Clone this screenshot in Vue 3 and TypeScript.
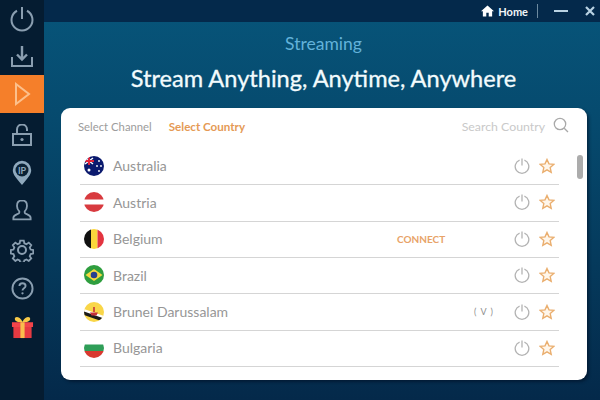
<script setup lang="ts">
const navItems = [
  { id: 'power', height: 38 },
  { id: 'download', height: 37 },
  { id: 'play', height: 38 },
  { id: 'lock', height: 44 },
  { id: 'ip', height: 32 },
  { id: 'user', height: 42 },
  { id: 'gear', height: 38 },
  { id: 'help', height: 39 },
  { id: 'gift', height: 38 },
]

const countries = [
  { name: 'Australia', flag: 'au', note: '' },
  { name: 'Austria', flag: 'at', note: '' },
  { name: 'Belgium', flag: 'be', note: 'connect' },
  { name: 'Brazil', flag: 'br', note: '' },
  { name: 'Brunei Darussalam', flag: 'bn', note: 'v' },
  { name: 'Bulgaria', flag: 'bg', note: '' },
]
</script>

<template>
  <div class="app">
    <nav class="sidebar">
      <div
        v-for="item in navItems"
        :key="item.id"
        class="nav-item"
        :class="{ active: item.id === 'play' }"
        :style="{ height: item.height + 'px' }"
      >
        <svg v-if="item.id === 'power'" width="26" height="26" viewBox="0 0 26 26" class="nav-icon">
          <path d="M8 4.750a10.500 10.500 0 1 0 10 0" />
          <path d="M13 1v12" />
        </svg>
        <svg v-else-if="item.id === 'download'" width="22" height="21" viewBox="0 0 22 21" class="nav-icon">
          <path d="M1 11v9h20v-9" />
          <path d="M11 0v13M6 8.500l5 5 5-5" stroke-width="2.400" />
        </svg>
        <svg v-else-if="item.id === 'play'" width="17" height="24" viewBox="0 0 17 24" class="play-icon">
          <path d="M2 2l13 10-13 10z" />
        </svg>
        <svg v-else-if="item.id === 'lock'" width="20" height="22" viewBox="0 0 20 22" class="nav-icon">
          <path d="M1 10h18v11H1z" />
          <path d="M5 10V5.500a5 5 0 0 1 10 0V7" />
          <circle cx="10" cy="15.500" r="1.600" class="fill" />
        </svg>
        <svg v-else-if="item.id === 'ip'" width="20" height="26" viewBox="0 0 20 26">
          <path d="M10 25C4 18 .8 14.500.8 10a9.200 9.200 0 0 1 18.400 0c0 4.500-3.200 8-9.200 15z" fill="#8fa9bd" />
          <circle cx="10" cy="10" r="6.500" fill="#0a2236" />
          <text x="10" y="13.500" text-anchor="middle" class="ip-label">IP</text>
        </svg>
        <svg v-else-if="item.id === 'user'" width="20" height="24" viewBox="0 0 22 24" class="nav-icon">
          <path d="M11 1.500c-3.800 0-5.500 2.700-5.500 6 0 2.500 1 4.500 2.500 6v1.500c0 1.500-6.500 2-6.500 5.500v1.800h19v-1.800c0-3.500-6.500-4-6.500-5.500v-1.500c1.500-1.500 2.500-3.500 2.500-6 0-3.300-1.700-6-5.500-6z" />
        </svg>
        <svg v-else-if="item.id === 'gear'" width="24" height="24" viewBox="0 0 24 24" class="nav-icon">
          <path d="M10 1.500h4l.6 3 2.300 1 2.600-1.700 2.800 2.800-1.700 2.600 1 2.300 2.900.5v4l-2.900.6-1 2.300 1.700 2.500-2.800 2.800-2.600-1.700-2.300 1-.6 2.500h-4l-.6-2.500-2.300-1-2.500 1.700-2.800-2.800 1.700-2.500-1-2.300-2.900-.6v-4l2.900-.5 1-2.300-1.700-2.600 2.800-2.800 2.500 1.700 2.300-1z" transform="translate(1.200 1.200) scale(.9)" />
          <circle cx="12" cy="12" r="4" />
        </svg>
        <svg v-else-if="item.id === 'help'" width="23" height="23" viewBox="0 0 24 24" class="nav-icon">
          <circle cx="12" cy="12" r="10.500" />
          <path d="M8.800 9.500c0-2 1.500-3 3.200-3s3.200 1 3.200 2.800c0 2.400-3.200 2.400-3.200 4.700" stroke-width="2" />
          <circle cx="12" cy="17" r="1.200" class="fill" />
        </svg>
        <svg v-else width="23" height="23" viewBox="0 0 24 24">
          <path d="M12 6C9 0 4 0 4 3c0 2.500 3 3.500 8 3.500 5 0 8-1 8-3.500 0-3-5-3-8 3z" fill="#f7c948" />
          <path d="M1 6.500h22v5H1z" fill="#f2444a" />
          <path d="M2.500 11.500h19V23h-19z" fill="#e63a42" />
          <path d="M9.800 6.500h4.400V23H9.800z" fill="#f9bd4d" />
        </svg>
      </div>
    </nav>

    <div class="main">
      <header class="topbar">
        <svg width="13" height="12" viewBox="0 0 14 12" class="home-icon">
          <path d="M7 0L0 6.200h2V12h3.700V8h2.600v4H12V6.200h2z" fill="#fff" />
        </svg>
        <span class="home-label">Home</span>
        <span class="divider"></span>
        <span class="minimize"></span>
        <svg width="10" height="10" viewBox="0 0 10 10" class="close">
          <path d="M1 1l8 8M9 1l-8 8" stroke="#b9d2e3" stroke-width="2.200" />
        </svg>
      </header>

      <div class="heading">
        <div class="subtitle">Streaming</div>
        <h1 class="title">Stream Anything, Anytime, Anywhere</h1>
      </div>

      <section class="card">
        <div class="tabs">
          <span class="tab">Select Channel</span>
          <span class="tab current">Select Country</span>
          <span class="search">Search Country</span>
          <svg width="16" height="16" viewBox="0 0 16 16" class="search-icon">
            <circle cx="7" cy="7" r="5.700" />
            <path d="M11.200 11.200L15 15" />
          </svg>
        </div>

        <ul class="list">
          <li v-for="country in countries" :key="country.name" class="row">
            <svg width="20" height="20" viewBox="0 0 20 20" class="flag">
              <template v-if="country.flag === 'au'">
                <rect width="20" height="20" fill="#0b1a6e" />
                <path d="M1 2l8 6M9 2L1 8" stroke="#fff" stroke-width="1.400" />
                <path d="M5 1v8M0 5h10" stroke="#e0243a" stroke-width="2" />
                <circle cx="5" cy="14" r="1.500" fill="#fff" />
                <circle cx="15" cy="5" r=".9" fill="#fff" />
                <circle cx="13" cy="10" r=".9" fill="#fff" />
                <circle cx="17" cy="10" r=".9" fill="#fff" />
                <circle cx="15" cy="15" r=".9" fill="#fff" />
              </template>
              <template v-else-if="country.flag === 'at'">
                <rect width="20" height="20" fill="#fff" />
                <path d="M0 0h20v7.500H0z" fill="#d83a3f" />
                <path d="M0 12.500h20V20H0z" fill="#d83a3f" />
              </template>
              <template v-else-if="country.flag === 'be'">
                <rect width="7" height="20" fill="#111" />
                <rect x="7" width="6.500" height="20" fill="#fbd63c" />
                <rect x="13.500" width="6.500" height="20" fill="#e3343f" />
              </template>
              <template v-else-if="country.flag === 'br'">
                <rect width="20" height="20" fill="#2f9e3f" />
                <path d="M10 4l8.500 6-8.500 6-8.500-6z" fill="#f6d93f" />
                <circle cx="10" cy="10" r="3.300" fill="#27408f" />
              </template>
              <template v-else-if="country.flag === 'bn'">
                <rect width="20" height="20" fill="#f9d648" />
                <path d="M0 7l20 7v3L0 10z" fill="#fff" />
                <path d="M0 9.500l20 7v3.500L0 13z" fill="#1b1b1b" />
                <path d="M6 10.500h8l-1.500 3h-5z" fill="#c6303a" />
                <path d="M10 5v5" stroke="#c6303a" stroke-width="1.600" />
              </template>
              <template v-else>
                <rect width="20" height="20" fill="#fff" />
                <path d="M0 6.500h20V13H0z" fill="#2f9e58" />
                <path d="M0 13h20v7H0z" fill="#d8392f" />
              </template>
            </svg>
            <span class="name">{{ country.name }}</span>
            <span v-if="country.note === 'connect'" class="connect">CONNECT</span>
            <span v-else-if="country.note === 'v'" class="badge">( V )</span>
            <svg width="16" height="16" viewBox="0 0 16 16" class="row-power">
              <path d="M5.600 2.140a6.800 6.800 0 1 0 4.800 0" />
              <path d="M8 .5v7" />
            </svg>
            <svg width="16" height="16" viewBox="0 0 16 16" class="row-star">
              <path d="M8 1.500l2 4.400 4.800.5-3.600 3.200 1 4.700L8 11.900l-4.200 2.400 1-4.700L1.200 6.400 6 5.900z" />
            </svg>
          </li>
        </ul>

        <div class="thumb"></div>
      </section>
    </div>
  </div>
</template>

<style scoped>
.app {
  display: flex;
  width: 600px;
  height: 400px;
  overflow: hidden;
  font-family: Lato, 'Open Sans', sans-serif;
}

.sidebar {
  width: 44px;
  flex: none;
  background: #051c31;
}

.nav-item {
  display: flex;
  align-items: center;
  justify-content: center;
  box-sizing: border-box;
}

.nav-item.active {
  background: #f57f2a;
}

.nav-icon {
  fill: none;
  stroke: #8a9eb0;
  stroke-width: 2;
}

.nav-icon .fill {
  fill: #8a9eb0;
  stroke: none;
}

.play-icon {
  fill: none;
  stroke: #fcc08c;
  stroke-width: 2;
}

.ip-label {
  font-size: 9px;
  font-weight: 700;
  fill: #8fa9bd;
}

.main {
  flex: 1;
  display: flex;
  flex-direction: column;
  background: linear-gradient(180deg, #07557a 0%, #064a6e 30%, #053a5c 65%, #04294a 100%);
}

.topbar {
  height: 22px;
  flex: none;
  display: flex;
  align-items: center;
  justify-content: flex-end;
  padding-right: 5px;
  background: #04294b;
}

.home-icon {
  margin-right: 4px;
}

.home-label {
  font-size: 11px;
  font-weight: 700;
  color: #f2f6f8;
}

.divider {
  width: 1px;
  height: 14px;
  margin: 0 16px 0 9px;
  background: #6d8aa0;
}

.minimize {
  width: 14px;
  height: 2px;
  margin-right: 17px;
  background: #b9d2e3;
}

.heading {
  height: 86px;
  flex: none;
  padding-left: 3px;
  text-align: center;
}

.subtitle {
  padding-top: 12px;
  font-size: 17.500px;
  line-height: 20px;
  color: #62b2da;
}

.title {
  margin: 10px 0 0;
  font-size: 23.600px;
  line-height: 28px;
  font-weight: 400;
  color: #f2fbfd;
  white-space: nowrap;
  -webkit-text-stroke: 0.3px #f2fbfd;
}

.card {
  position: relative;
  width: 526px;
  height: 272px;
  margin-left: 17px;
  padding: 0 28px 0 19px;
  box-sizing: border-box;
  background: #fff;
  border-radius: 9px;
  box-shadow: 2px 2px 3px rgba(0, 15, 35, 0.55);
}

.tabs {
  display: flex;
  align-items: center;
  height: 36px;
  margin-left: -2px;
}

.tab {
  font-size: 11.300px;
  color: #9c9c9c;
}

.tab.current {
  margin-left: 17px;
  font-size: 11.600px;
  font-weight: 700;
  color: #e59a55;
}

.search {
  margin-left: auto;
  font-size: 12.300px;
  color: #c9c9c9;
}

.search-icon {
  margin: 0 -10px 3px 8px;
  fill: none;
  stroke: #a9a9a9;
  stroke-width: 1.300;
}

.list {
  margin: 4.800px 0 0;
  padding: 0;
  list-style: none;
}

.row {
  display: flex;
  align-items: center;
  height: 36.400px;
  box-sizing: border-box;
  padding: 0 4px 1px 4px;
  border-bottom: 1px solid #d5d5d5;
}

.flag {
  flex: none;
  border-radius: 50%;
}

.name {
  margin-left: 9px;
  font-size: 14px;
  color: #969696;
}

.connect {
  position: absolute;
  left: 336px;
  font-size: 10px;
  font-weight: 700;
  color: #e8a368;
}

.badge {
  position: absolute;
  left: 413px;
  font-size: 9px;
  letter-spacing: 1px;
  color: #8e8e8e;
}

.row-power {
  margin-left: auto;
  fill: none;
  stroke: #b3b3b3;
  stroke-width: 1.300;
}

.row-star {
  margin-left: 9px;
  fill: #fff6ea;
  stroke: #eaae6e;
  stroke-width: 1.400;
}

.thumb {
  position: absolute;
  top: 47px;
  right: 4px;
  width: 6px;
  height: 24px;
  border-radius: 3px;
  background: #acacac;
}
</style>
